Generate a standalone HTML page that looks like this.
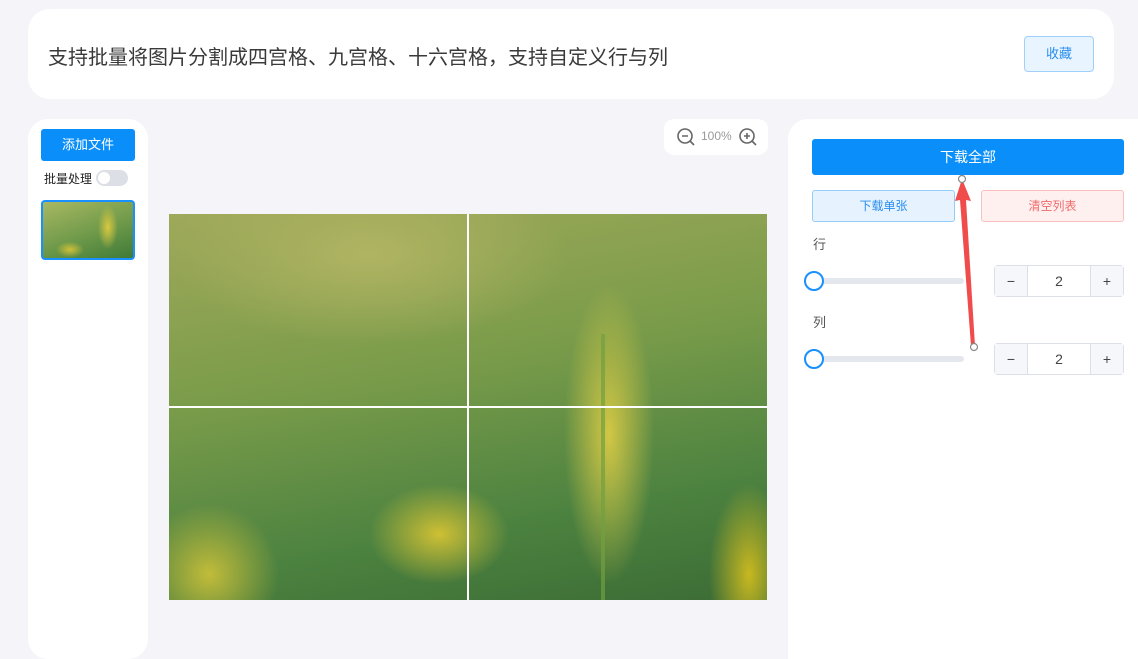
<!DOCTYPE html>
<html><head><meta charset="utf-8"><style>
*{margin:0;padding:0;box-sizing:border-box}
body{width:1138px;height:647px;background:#f4f4f9;font-family:"Liberation Sans","Noto Sans CJK SC",sans-serif;position:relative;overflow:hidden}
.abs{position:absolute}
.card{background:#fff}
</style></head><body>
<div class="abs card" style="left:28px;top:9px;width:1086px;height:90px;border-radius:22px"></div>
<div class="abs" style="left:48px;top:41px;font-size:20px;color:#3a3a3a">支持批量将图片分割成四宫格、九宫格、十六宫格，支持自定义行与列</div>
<div class="abs" style="left:1024px;top:36px;width:70px;height:36px;border:1px solid #a0cffc;background:#e8f4ff;border-radius:4px;color:#2b8ef0;font-size:13px;text-align:center;line-height:34px">收藏</div>

<div class="abs card" style="left:28px;top:119px;width:120px;height:540px;border-radius:20px"></div>
<div class="abs" style="left:41px;top:129px;width:94px;height:32px;background:#0a8ffa;border-radius:3px;color:#fff;font-size:13px;text-align:center;line-height:32px">添加文件</div>
<div class="abs" style="left:44px;top:170px;font-size:12px;color:#222">批量处理</div>
<div class="abs" style="left:96px;top:170px;width:32px;height:16px;border-radius:8px;background:#dcdfe6"><div style="position:absolute;left:2px;top:2px;width:12px;height:12px;border-radius:50%;background:#fff"></div></div>
<div class="abs" style="left:41px;top:200px;width:94px;height:60px;border:2px solid #1890ff;border-radius:4px;background:radial-gradient(ellipse 10px 22px at 72% 45%,#d8c840,transparent),radial-gradient(ellipse 14px 8px at 30% 85%,#d0c038,transparent),linear-gradient(160deg,#a9b862,#6f9a4a 55%,#3f7a38)"></div>

<div class="abs card" style="left:664px;top:119px;width:104px;height:36px;border-radius:10px"></div>
<svg class="abs" style="left:676px;top:127px" width="20" height="20" viewBox="0 0 20 20"><circle cx="9" cy="9" r="7" fill="none" stroke="#666" stroke-width="1.6"/><path d="M6 9h6M14 14l4 4" stroke="#666" stroke-width="1.6"/></svg>
<div class="abs" style="left:701px;top:129px;font-size:12px;color:#999">100%</div>
<svg class="abs" style="left:738px;top:127px" width="20" height="20" viewBox="0 0 20 20"><circle cx="9" cy="9" r="7" fill="none" stroke="#666" stroke-width="1.6"/><path d="M6 9h6M9 6v6M14 14l4 4" stroke="#666" stroke-width="1.6"/></svg>

<div class="abs" style="left:169px;top:214px;width:598px;height:386px;overflow:hidden;background:
radial-gradient(ellipse 40px 90px at 580px 360px,#c8b820,transparent),
radial-gradient(ellipse 70px 70px at 40px 360px,#c2bc3a,transparent),
radial-gradient(ellipse 70px 50px at 270px 320px,#cfc034,transparent),
radial-gradient(ellipse 45px 150px at 440px 220px,#d2c745,transparent),
radial-gradient(ellipse 200px 90px at 200px 40px,#b0b462,transparent),
linear-gradient(170deg,#9fa95a 0%,#7a9c4a 40%,#4c8240 75%,#3c6c35 100%)">
<div style="position:absolute;left:432px;top:120px;width:4px;height:266px;background:#72a040;opacity:.7"></div>
<div style="position:absolute;left:298px;top:0;width:2px;height:386px;background:#fff"></div>
<div style="position:absolute;left:0;top:192px;width:598px;height:2px;background:#fff"></div>
</div>

<div class="abs card" style="left:788px;top:119px;width:360px;height:540px;border-radius:20px 0 0 0"></div>
<div class="abs" style="left:812px;top:139px;width:312px;height:36px;background:#0a8ffa;border-radius:3px;color:#fff;font-size:14px;text-align:center;line-height:36px">下载全部</div>
<div class="abs" style="left:812px;top:190px;width:143px;height:32px;background:#e6f3ff;border:1px solid #94cdf8;border-radius:3px;color:#2b8ef0;font-size:12px;text-align:center;line-height:30px">下载单张</div>
<div class="abs" style="left:981px;top:190px;width:143px;height:32px;background:#fff0f0;border:1px solid #fac0c0;border-radius:3px;color:#f06a6a;font-size:12px;text-align:center;line-height:30px">清空列表</div>
<div class="abs" style="left:813px;top:234px;font-size:13px;color:#555">行</div>
<div class="abs" style="left:813px;top:312px;font-size:13px;color:#555">列</div>
<div class="abs" style="left:814px;top:278px;width:150px;height:6px;background:#e4e7ed;border-radius:3px"></div>
<div class="abs" style="left:804px;top:271px;width:20px;height:20px;border:2px solid #1890ff;border-radius:50%;background:#fff"></div>
<div class="abs" style="left:814px;top:356px;width:150px;height:6px;background:#e4e7ed;border-radius:3px"></div>
<div class="abs" style="left:804px;top:349px;width:20px;height:20px;border:2px solid #1890ff;border-radius:50%;background:#fff"></div>
<div class="abs" style="left:994px;top:265px;width:130px;height:32px;border:1px solid #dcdfe6;border-radius:4px;display:flex;font-size:14px;color:#444">
<div style="width:33px;background:#f5f7fa;text-align:center;line-height:30px;border-right:1px solid #dcdfe6">−</div><div style="flex:1;text-align:center;line-height:30px">2</div><div style="width:33px;background:#f5f7fa;text-align:center;line-height:30px;border-left:1px solid #dcdfe6">+</div></div>
<div class="abs" style="left:994px;top:343px;width:130px;height:32px;border:1px solid #dcdfe6;border-radius:4px;display:flex;font-size:14px;color:#444">
<div style="width:33px;background:#f5f7fa;text-align:center;line-height:30px;border-right:1px solid #dcdfe6">−</div><div style="flex:1;text-align:center;line-height:30px">2</div><div style="width:33px;background:#f5f7fa;text-align:center;line-height:30px;border-left:1px solid #dcdfe6">+</div></div>

<svg class="abs" style="left:940px;top:170px" width="50" height="190" viewBox="0 0 50 190">
<path d="M22 9 L15 31 L20 30 L31 176 L35 176 L26 30 L31 31 Z" fill="#f04c4c"/>
<circle cx="22" cy="9" r="3.5" fill="#fff" stroke="#888" stroke-width="1.2"/>
<circle cx="34" cy="177" r="3.5" fill="#fff" stroke="#888" stroke-width="1.2"/>
</svg>
</body></html>
